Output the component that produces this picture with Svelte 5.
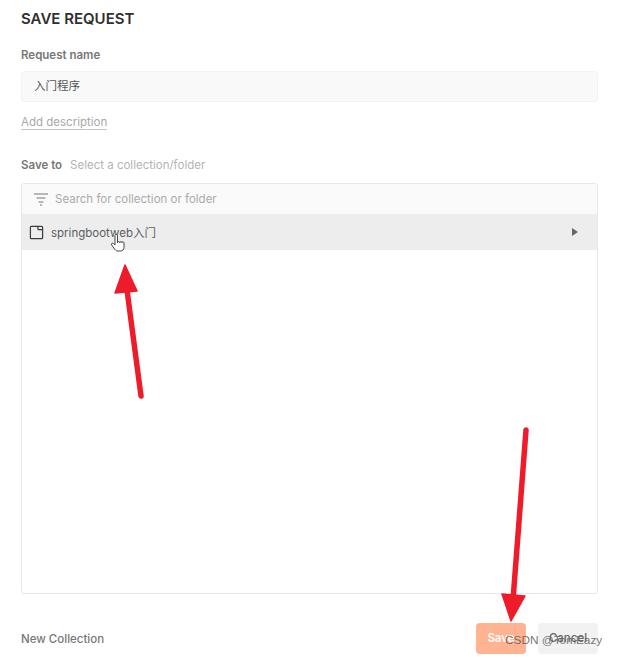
<script lang="ts">
  // Save request dialog: static markup, annotation arrows drawn on top.
  const requestName = '入门程序';
  const collections = ['springbootweb入门'];
</script>

<div class="dialog">
  <h1>SAVE REQUEST</h1>

  <div class="label">Request name</div>
  <div class="input">{requestName}</div>
  <div class="add-desc"><span>Add description</span></div>

  <div class="save-to">
    <span class="label-inline">Save to</span>
    <span class="hint">Select a collection/folder</span>
  </div>

  <div class="picker">
    <div class="search">
      <svg width="16" height="14" viewBox="0 0 16 14" fill="none" stroke="#777" stroke-width="1.2">
        <path d="M1 2h14M3.500 6h9M5.500 10h5M7 13h2" />
      </svg>
      <span>Search for collection or folder</span>
    </div>
    {#each collections as name}
      <div class="row">
        <svg width="15" height="15" viewBox="0 0 16 16" fill="none" stroke="#3c3c3c" stroke-width="1.300">
          <path d="M2.500 1.500h11a1 1 0 0 1 1 1v11a1 1 0 0 1-1 1h-11a1 1 0 0 1-1-1v-11a1 1 0 0 1 1-1z" />
          <path d="M9.500 1.500v2.500a1 1 0 0 0 1 1h4" />
        </svg>
        <span class="name">{name}</span>
        <span class="caret"></span>
      </div>
    {/each}
  </div>

  <div class="footer">
    <span class="new">New Collection</span>
    <div class="buttons">
      <div class="btn save">Save</div>
      <div class="btn cancel">Cancel</div>
    </div>
  </div>

  <!-- annotations over the dialog -->
  <svg class="overlay" width="618" height="658" viewBox="0 0 618 658">
    <path d="M141 396 L127 290" stroke="#ee1c2b" stroke-width="5.500" stroke-linecap="round" fill="none" />
    <path d="M125 265 L137 291 L115 293 Z" fill="#ee1c2b" stroke="#ee1c2b" stroke-width="1.500" stroke-linejoin="round" />
    <path d="M526 430 L513 600" stroke="#ee1c2b" stroke-width="5.500" stroke-linecap="round" fill="none" />
    <path d="M511 621 L502 594 L525 596 Z" fill="#ee1c2b" stroke="#ee1c2b" stroke-width="1.500" stroke-linejoin="round" />
    <g stroke="#444" stroke-width="1" fill="#fff" stroke-linejoin="round">
      <path d="M115 235.500v9.500l-1.500-1.500c-1.200-1-2.600 0.200-1.800 1.500l3 4.200c1 1.300 2 1.800 3.300 1.800h2.500c2 0 3.500-1.500 3.500-3.500v-4.500c0-1.500-2-1.500-2-0.300c0-1.500-2.200-1.500-2.200 0c0-1.500-2.300-1.500-2.300 0v-7.200c0-1.400-2.500-1.400-2.500 0z" />
    </g>
  </svg>
  <div class="watermark">CSDN @TomEazy</div>
</div>

<style>
  :global(body) {
    margin: 0;
    background: #fff;
  }

  .dialog {
    position: relative;
    width: 618px;
    height: 658px;
    box-sizing: border-box;
    padding: 10px 20px 0 21px;
    font-family: Inter, 'Noto Sans CJK SC', sans-serif;
    overflow: hidden;
    color: #3a3a3a;
  }

  h1 {
    margin: 0;
    font-size: 15px;
    line-height: 17px;
    font-weight: 600;
    color: #2f2f2f;
  }

  .label,
  .label-inline {
    font-size: 11.500px;
    font-weight: 600;
    color: #777;
  }

  .label {
    margin-top: 20px;
    line-height: 16px;
  }

  .input {
    margin-top: 8px;
    height: 31px;
    box-sizing: border-box;
    padding-left: 12px;
    border: 1px solid #f2f2f2;
    border-radius: 4px;
    background: #f9f9f9;
    font-size: 11.500px;
    line-height: 29px;
    color: #555;
  }

  .add-desc {
    margin-top: 13px;
    font-size: 11.500px;
    line-height: 14px;
    color: #a8a8a8;
  }

  .add-desc span {
    border-bottom: 1px solid #c4c4c4;
  }

  .save-to {
    margin-top: 28px;
    display: flex;
    align-items: center;
    gap: 8px;
    height: 16px;
  }

  .hint {
    font-size: 11.500px;
    color: #b4b4b4;
  }

  .picker {
    margin-top: 10px;
    height: 411px;
    box-sizing: border-box;
    border: 1px solid #e8e8e8;
    border-radius: 3px;
  }

  .search {
    height: 30px;
    display: flex;
    align-items: center;
    gap: 6px;
    padding-left: 11px;
    background: #fafafa;
    font-size: 11.500px;
    color: #aaa;
  }

  .row {
    height: 36px;
    display: flex;
    align-items: center;
    gap: 7px;
    padding-left: 7px;
    padding-right: 19px;
    background: #ededed;
    font-size: 11.500px;
    color: #5c5c5c;
  }

  .name {
    flex: 1;
  }

  .caret {
    width: 0;
    height: 0;
    border-left: 6px solid #666;
    border-top: 4px solid transparent;
    border-bottom: 4px solid transparent;
  }

  .footer {
    margin-top: 29px;
    height: 31px;
    display: flex;
    align-items: center;
    justify-content: space-between;
  }

  .new {
    font-size: 11.500px;
    font-weight: 500;
    color: #777;
  }

  .buttons {
    display: flex;
    gap: 12px;
  }

  .btn {
    height: 31px;
    border-radius: 4px;
    font-size: 11.500px;
    font-weight: 600;
    line-height: 31px;
    text-align: center;
  }

  .save {
    width: 50px;
    background: #ffb391;
    color: #fff;
  }

  .cancel {
    width: 60px;
    background: #f2f2f2;
    color: #666;
    font-weight: 500;
  }

  .overlay {
    position: absolute;
    left: 0;
    top: 0;
    pointer-events: none;
  }

  .watermark {
    position: absolute;
    left: 505px;
    top: 632px;
    font-family: 'Liberation Sans', sans-serif;
    font-size: 11.800px;
    line-height: 16px;
    color: rgba(90, 90, 90, 0.85);
    white-space: nowrap;
  }
</style>
